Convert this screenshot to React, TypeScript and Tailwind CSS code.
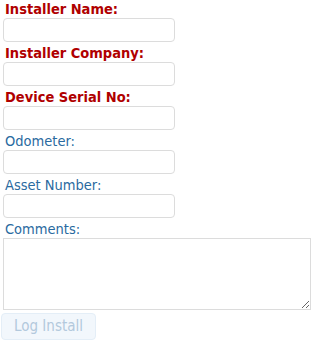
import React from "react";

const FIELDS = [
  { label: "Installer Name:", required: true },
  { label: "Installer Company:", required: true },
  { label: "Device Serial No:", required: true },
  { label: "Odometer:", required: false },
  { label: "Asset Number:", required: false },
];

export default function App() {
  return (
    <div className="w-[314px] h-[345px] bg-white font-['DejaVu_Sans_Condensed','DejaVu_Sans',sans-serif] text-[14.5px]">
      <form className="flex flex-col">
        {FIELDS.map((f) => (
          <div key={f.label} className="flex flex-col">
            <label
              className={
                f.required
                  ? "h-[18px] leading-[18px] pl-[5px] font-bold text-[#b00000]"
                  : "h-[18px] leading-[18px] pl-[5px] text-[#2a6aa0]"
              }
            >
              {f.label}
            </label>
            <input
              type="text"
              className="ml-[3px] mb-[2px] w-[172px] h-[24px] rounded-[4px] border border-[#dcdcdc] bg-white outline-none"
            />
          </div>
        ))}
        <label className="h-[18px] leading-[18px] pl-[5px] text-[#2a6aa0]">Comments:</label>
        <textarea className="ml-[3px] w-[308px] h-[72px] border border-[#dcdcdc] bg-white outline-none resize" />
        <button
          type="button"
          disabled
          className="ml-[1px] mt-[3px] w-[95px] h-[27px] rounded-[4px] border border-[#e4eef7] bg-[#f2f7fc] text-[#b3c9dd] text-[15px] text-center"
        >
          Log Install
        </button>
      </form>
    </div>
  );
}
